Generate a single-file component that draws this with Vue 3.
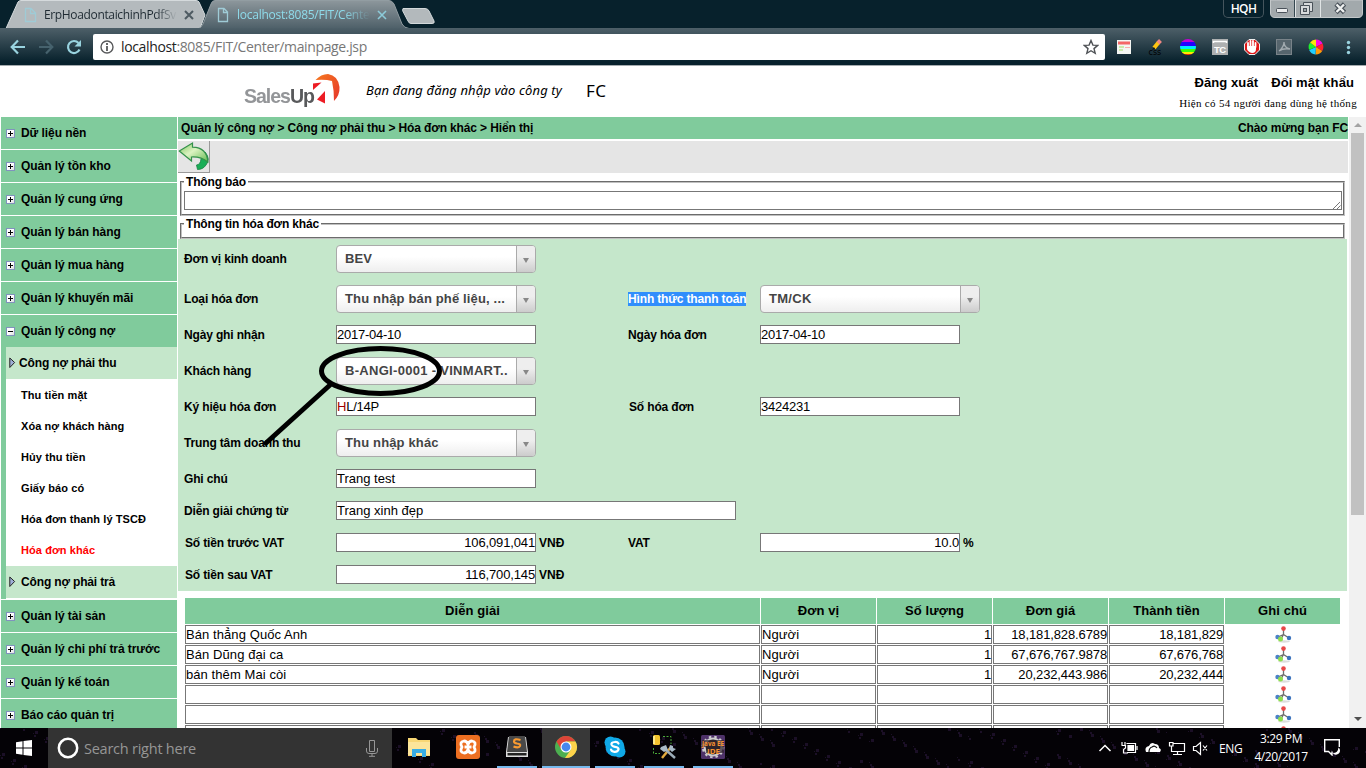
<script setup>
const topMenu = ['Dữ liệu nền', 'Quản lý tồn kho', 'Quản lý cung ứng', 'Quản lý bán hàng', 'Quản lý mua hàng', 'Quản lý khuyến mãi']
const subMenu = ['Thu tiền mặt', 'Xóa nợ khách hàng', 'Hủy thu tiền', 'Giấy báo có', 'Hóa đơn thanh lý TSCĐ', 'Hóa đơn khác']
const bottomMenu = ['Quản lý tài sản', 'Quản lý chi phí trả trước', 'Quản lý kế toán', 'Báo cáo quản trị']

const formRows = [
  { label: 'Đơn vị kinh doanh', select: 'BEV' },
  { label: 'Loại hóa đơn', select: 'Thu nhập bán phế liệu, ...', label2: 'Hình thức thanh toán', select2: 'TM/CK', marked: true },
  { label: 'Ngày ghi nhận', input: '2017-04-10', label2: 'Ngày hóa đơn', input2: '2017-04-10', digits: true },
  { label: 'Khách hàng', select: 'B-ANGI-0001 - VINMART..', caps: true },
  { label: 'Ký hiệu hóa đơn', input: 'HL/14P', red: true, label2: 'Số hóa đơn', input2: '3424231', digits: true },
  { label: 'Trung tâm doanh thu', select: 'Thu nhập khác' },
  { label: 'Ghi chú', input: 'Trang test' },
  { label: 'Diễn giải chứng từ', input: 'Trang xinh đẹp', wide: true },
  { label: 'Số tiền trước VAT', input: '106,091,041', unit: 'VNĐ', num: true, label2: 'VAT', input2: '10.0', unit2: '%' },
  { label: 'Số tiền sau VAT', input: '116,700,145', unit: 'VNĐ', num: true }
]

const columns = ['Diễn giải', 'Đơn vị', 'Số lượng', 'Đơn giá', 'Thành tiền', 'Ghi chú']
const rows = [
  ['Bán thẳng Quốc Anh', 'Người', '1', '18,181,828.6789', '18,181,829'],
  ['Bán Dũng đại ca', 'Người', '1', '67,676,767.9878', '67,676,768'],
  ['bán thêm Mai còi', 'Người', '1', '20,232,443.986', '20,232,444'],
  ['', '', '', '', ''],
  ['', '', '', '', ''],
  ['', '', '', '', '']
]

// Faint specks of the dark wallpaper behind the taskbar
const specks = Array.from({ length: 420 }, (_, i) => ({
  x: Math.floor(((i * 97.31) % 1366) / 11) * 11 + (i % 3),
  y: (i * 37) % 40,
  w: 1 + (i % 3),
  h: 1 + (i % 3)
}))
</script>

<template>
  <div class="screen">
    <header class="chrome">
      <svg class="tabs-bg" width="1366" height="29" viewBox="0 0 1366 29">
        <defs>
          <linearGradient id="tabg" x1="0" y1="0" x2="0" y2="1">
            <stop offset="0" stop-color="#8d979c" /><stop offset="1" stop-color="#4d5f68" />
          </linearGradient>
        </defs>
        <path d="M6 28.500L18 2Q19 .5 21 .5H196Q198 .5 199 2L205 15L200 28.500Z" fill="#b4babd" stroke="#d5dadc" />
        <path d="M198 29Q201 28 203 24L211 4Q212 .5 215 .5H389Q392 .5 394 4L402 24Q404 28 409 29Z" fill="url(#tabg)" />
        <path d="M198 29Q201 28 203 24L211 4Q212 .5 215 .5H389Q392 .5 394 4L402 24Q404 28 409 28.500" fill="none" stroke="#929da2" />
        <path d="M403 8.500H425Q428 8.500 429 11L434 21Q435 23.500 432 23.500H411Q409 23.500 408 21L402.500 10.500Z" fill="#b3b9bc" stroke="#d3d9db" />
        <g fill="none" stroke="#9fcbd6" stroke-width="1.300">
          <path d="M25.500 8.500H31L35.500 13V21.500H25.500ZM30.500 9V13.500H35" />
          <path d="M218.500 8.500H224L227.500 12V21.500H218.500ZM223.500 9V12.500H227" />
        </g>
        <path d="M185 11L193 19M193 11L185 19" stroke="#4e5b62" stroke-width="2" />
        <path d="M378 11L386 19M386 11L378 19" stroke="#8ccbd9" stroke-width="1.600" />
      </svg>
      <div class="tabtext">
        <span class="tab one">ErpHoadontaichinhPdfSv</span>
        <span class="tab two">localhost:8085/FIT/Cente</span>
      </div>
      <div class="winctl">
        <span class="user">HQH</span>
        <svg width="94" height="18" viewBox="0 0 94 18">
          <path d="M.5 0V13Q.5 17.500 5 17.500H88Q92.500 17.500 92.500 13V0Z" fill="#a2a9ac" stroke="#c3c8ca" />
          <path d="M25.500 0V17M50.500 0V17" stroke="#e0e4e5" /><path d="M24.500 0V17" stroke="#354750" />
          <rect x="6.500" y="8.500" width="11" height="4" rx="1" fill="#e9ebec" stroke="#495159" />
          <path d="M33.500 2.500H42.500V11.500H39.500V14.500H30.500V5.500H33.500Z" fill="#d7dadc" stroke="#495159" />
          <rect x="33.500" y="8.500" width="3" height="3" fill="#a2a9ac" stroke="#495159" />
          <path d="M33.500 5.500H39.500V11.500" fill="none" stroke="#495159" />
          <path d="M66 4L74.500 12.500M74.500 4L66 12.500" stroke="#495159" stroke-width="4.600" />
          <path d="M66.500 4.500L74 12M74 4.500L66.500 12" stroke="#eef0f0" stroke-width="2.400" />
        </svg>
      </div>
      <div class="toolbar">
        <svg class="nav" width="93" height="37" viewBox="0 28 93 37" fill="none" stroke-width="2.200">
          <path d="M25 47H12M18 40.500L11.700 47L18 53.500" stroke="#99d3df" />
          <path d="M39 47H52M46 40.500L52.300 47L46 53.500" stroke="#46626d" />
          <path d="M78.500 43A6 6 0 1 0 79.500 49.500" stroke="#99d3df" /><path d="M81 40V46.500H74.500Z" fill="#99d3df" />
        </svg>
        <div class="omni">
          <svg width="14" height="14" viewBox="0 0 14 14"><circle cx="7" cy="7" r="6" fill="none" stroke="#58595b" stroke-width="1.400" /><path d="M7 6V11M7 3V5" stroke="#58595b" stroke-width="1.800" /></svg>
          <span class="url">localhost<i>:8085/FIT/Center/mainpage.jsp</i></span>
          <svg class="star" width="16" height="16" viewBox="0 0 16 16"><path d="M8 1.500L9.900 6.100L14.700 6.400L11 9.600L12.200 14.300L8 11.700L3.800 14.300L5 9.600L1.300 6.400L6.100 6.100Z" fill="none" stroke="#4f5256" stroke-width="1.400" /></svg>
        </div>
        <svg class="ext" width="261" height="37" viewBox="1105 28 261 37">
          <rect x="1117" y="40" width="14" height="14" fill="#f4f6f3" /><path d="M1118 43H1130" stroke="#f46767" stroke-width="3" /><path d="M1125 47.500H1130" stroke="#f8b0b0" /><path d="M1119 47H1124M1119 50H1123" stroke="#a1df62" />
          <path d="M1154 48L1158.500 42.500" stroke="#ffc411" stroke-width="4" /><path d="M1158 43L1160.500 40.500" stroke="#f18883" stroke-width="4" /><path d="M1152 50L1154 47L1155 49Z" fill="#111" />
          <text x="1148.500" y="55" font-family="DejaVu Sans" font-size="8">css</text>
          <clipPath id="ball"><circle cx="1188" cy="47" r="8" /></clipPath>
          <g clip-path="url(#ball)"><path d="M1180 39h16v3h-16z" fill="#c200d6" /><path d="M1180 42h16v4h-16z" fill="#2100ff" /><path d="M1180 46h16v3h-16z" fill="#00eaff" /><path d="M1180 49h16v3h-16z" fill="#37ff09" /><path d="M1180 52h16v2h-16z" fill="#ffe900" /><path d="M1180 54h16v2h-16z" fill="#ff3200" /></g>
          <rect x="1212" y="39" width="16" height="16" fill="#aeb0b1" /><path d="M1213.500 43V41.500H1226.500V43" fill="none" stroke="#fff" stroke-width="1.500" />
          <text x="1214" y="53" font-family="Liberation Sans" font-weight="700" font-size="9.500" fill="#fff" textLength="12">TC</text>
          <path d="M1249 39.500H1255L1259.500 44V50L1255 54.500H1249L1244.500 50V44Z" fill="#df1717" stroke="#eee" />
          <path d="M1248 47V43M1250.500 46V41M1253 46V41M1255.500 47V43" stroke="#fff" stroke-width="1.800" stroke-linecap="round" /><path d="M1247 46H1256V49Q1256 53 1252 53Q1248 52 1247 49Z" fill="#fff" />
          <rect x="1276.500" y="39.500" width="15" height="15" fill="#56656d" stroke="#798389" /><path d="M1279 51Q1284 47 1284 42Q1284 48 1290 49Q1283 48 1279 51" fill="none" stroke="#a2abb0" stroke-width="1.300" />
          <g fill="none" stroke-width="7.400" transform="rotate(-90 1316 47)"><circle cx="1316" cy="47" r="3.700" stroke="#fc0ae0" stroke-dasharray="3.875 19.370" /><circle cx="1316" cy="47" r="3.700" stroke="#ff2030" stroke-dasharray="3.875 19.370" stroke-dashoffset="-3.875" /><circle cx="1316" cy="47" r="3.700" stroke="#ff9a08" stroke-dasharray="3.875 19.370" stroke-dashoffset="-7.750" /><circle cx="1316" cy="47" r="3.700" stroke="#20cfff" stroke-dasharray="3.875 19.370" stroke-dashoffset="-11.620" /><circle cx="1316" cy="47" r="3.700" stroke="#20ef2d" stroke-dasharray="3.875 19.370" stroke-dashoffset="-15.500" /><circle cx="1316" cy="47" r="3.700" stroke="#ffe408" stroke-dasharray="3.875 19.370" stroke-dashoffset="-19.370" /></g>
          <g fill="#99d3df"><circle cx="1348.500" cy="42.500" r="1.700" /><circle cx="1348.500" cy="47.500" r="1.700" /><circle cx="1348.500" cy="52.500" r="1.700" /></g>
        </svg>
      </div>
    </header>

    <div class="sitehead">
      <div class="logo">
        <span class="brand">Sales<b>Up</b></span>
        <svg class="swoosh" width="30" height="32" viewBox="311 73 30 32">
          <defs><linearGradient id="or" x1="0" y1="0" x2="1" y2="1"><stop offset="0" stop-color="#f6791e" /><stop offset="1" stop-color="#e5352c" /></linearGradient></defs>
          <path d="M315.500 80Q321 74 328 74Q338 75.500 339.500 87Q340 95 334 101Q334 90 332 81Q325 79 315.500 80Z" fill="url(#or)" />
          <path d="M313 83.500L321.500 82.500L313 90Z" fill="#ed1c24" /><path d="M317 99.500L325 91V103.500Z" fill="#ed1c24" />
        </svg>
      </div>
      <em class="login">Bạn đang đăng nhập vào công ty</em>
      <span class="fc">FC</span>
      <div class="account">
        <div class="links"><b>Đăng xuất</b><b class="pw">Đổi mật khẩu</b></div>
        <div class="online">Hiện có 54 người đang dùng hệ thống</div>
      </div>
    </div>

    <div class="body">
      <nav class="side">
        <div v-for="m in topMenu" :key="m" class="item"><i class="box plus"></i><span>{{ m }}</span></div>
        <div class="item open"><i class="box"></i><span>Quản lý công nợ</span></div>
        <div class="group">
          <div class="sub"><svg width="7" height="12" viewBox="0 0 7 12"><path d="M.8 1L5.600 5.500L.8 10.500Z" fill="#9fb0d8" stroke="#222" /></svg><span>Công nợ phải thu</span></div>
          <div v-for="(m, i) in subMenu" :key="m" class="leaf" :class="{ current: i === 5 }">{{ m }}</div>
          <div class="sub second"><svg width="7" height="12" viewBox="0 0 7 12"><path d="M.8 1L5.600 5.500L.8 10.500Z" fill="#9fb0d8" stroke="#222" /></svg><span>Công nợ phải trả</span></div>
        </div>
        <div v-for="m in bottomMenu" :key="m" class="item"><i class="box plus"></i><span>{{ m }}</span></div>
      </nav>

      <main class="main">
        <div class="crumb"><span>Quản lý công nợ &gt; Công nợ phải thu &gt; Hóa đơn khác &gt; Hiển thị</span><span class="hello">Chào mừng bạn FC</span></div>
        <div class="actions">
          <div class="back">
            <svg width="31" height="31" viewBox="178 141 31 31">
              <defs><linearGradient id="gr" x1="0" y1="0" x2="1" y2="1"><stop offset="0" stop-color="#7cc45c" /><stop offset=".45" stop-color="#dcf3c2" /><stop offset="1" stop-color="#62ba50" /></linearGradient></defs>
              <path d="M205 152Q211 159 206 165Q203 169.500 197.500 169.500L196.500 165Q200.500 164.500 201 159Z" fill="#19ae57" stroke="#168243" stroke-width=".8" />
              <path d="M179.300 151L192.500 143V147.200Q207 147.500 207.800 162Q201 156.500 191.500 157V161Z" fill="url(#gr)" stroke="#33914a" stroke-width="1.200" />
            </svg>
          </div>
        </div>
        <fieldset class="note"><legend>Thông báo</legend><div class="area"><svg width="8" height="8" viewBox="0 0 8 8"><path d="M0 8L7 1M4 8L7.500 4.500" stroke="#666" stroke-width=".9" /></svg></div></fieldset>
        <fieldset class="info"><legend>Thông tin hóa đơn khác</legend></fieldset>

        <section class="form">
          <div v-for="r in formRows" :key="r.label" class="frow" :class="{ tall: r.select, digits: r.digits }">
            <label :class="{ money: r.num }">{{ r.label }}</label>
            <div class="ctl">
              <div v-if="r.select" class="select" :class="{ caps: r.caps }"><span>{{ r.select }}</span><i></i></div>
              <div v-else class="input" :class="{ wide: r.wide, num: r.num }"><template v-if="r.red"><u>H</u>{{ r.input.slice(1) }}</template><template v-else>{{ r.input }}</template></div>
              <b v-if="r.unit" class="unit">{{ r.unit }}</b>
            </div>
            <label v-if="r.label2"><span :class="{ marked: r.marked, money: r.label2 === 'Số hóa đơn' }">{{ r.label2 }}</span></label>
            <div v-if="r.label2" class="ctl">
              <div v-if="r.select2" class="select big"><span>{{ r.select2 }}</span><i></i></div>
              <div v-else class="input" :class="{ num: r.unit2 }">{{ r.input2 }}</div>
              <b v-if="r.unit2" class="unit">{{ r.unit2 }}</b>
            </div>
          </div>
          <svg class="scribble" width="130" height="108" viewBox="260 340 130 108">
            <ellipse cx="380.500" cy="371" rx="59" ry="22.500" />
            <path d="M330 385L266 443" />
          </svg>
        </section>

        <section class="grid">
          <div class="gr head"><div v-for="c in columns" :key="c">{{ c }}</div></div>
          <div v-for="(r, i) in rows" :key="i" class="gr line">
            <div v-for="(c, j) in r" :key="j" class="cell" :class="{ right: j > 1 }">{{ c }}</div>
            <div class="ico">
              <svg width="17" height="17" viewBox="0 0 17 17">
                <ellipse cx="9" cy="15.500" rx="6" ry="1.200" fill="#ddd" />
                <path d="M8.500 3V8.500L3 11M8.500 8.500L14 12M8.500 8.500L6 13" fill="none" stroke="#6d6d6d" stroke-width="1.300" />
                <circle cx="8.500" cy="2.600" r="2.300" fill="#e84848" /><circle cx="2.500" cy="11" r="2.200" fill="#4c82c6" /><circle cx="14" cy="12" r="2.200" fill="#3c73bd" /><circle cx="5.500" cy="13" r="2.500" fill="#8de04c" />
              </svg>
            </div>
          </div>
        </section>
      </main>
      <div class="scroll"><i class="up"></i><div class="thumb"></div><i class="down"></i></div>
    </div>

    <footer class="taskbar">
      <svg class="wall" width="1366" height="40"><rect v-for="(s, i) in specks" :key="i" :x="s.x" :y="s.y" :width="s.w" :height="s.h" fill="#1b0f26" /></svg>
      <div class="start"><svg width="16" height="16" viewBox="0 0 16 16"><path d="M0 2.200L6.500 1.300V7.500H0ZM7.500 1.100L16 0V7.500H7.500ZM0 8.500H6.500V14.700L0 13.800ZM7.500 8.500H16V16L7.500 14.900Z" fill="#fff" /></svg></div>
      <div class="search">
        <svg width="22" height="22" viewBox="0 0 22 22"><circle cx="11" cy="11" r="9.200" fill="none" stroke="#fff" stroke-width="2.500" /></svg>
        <span>Search right here</span>
        <svg class="mic" width="12" height="17" viewBox="0 0 12 17"><path d="M3.500.5H8.500V11.500H3.500ZM.5 8V11Q.5 13.500 3 13.500H9Q11.500 13.500 11.500 11V8M6 13.500V16M3 16.300H9" fill="none" stroke="#969696" /></svg>
      </div>
      <div class="app">
        <svg width="24" height="24" viewBox="0 0 24 24"><path d="M1 3H9L11 5H23V21H1Z" fill="#f8d775" /><path d="M1 7H23V20H1Z" fill="#fce59a" /><path d="M5 22V14H19V22H15V18H9V22Z" fill="#38ade4" /></svg>
      </div>
      <div class="app">
        <svg width="24" height="24" viewBox="0 0 24 24"><rect width="24" height="24" rx="3" fill="#ed6f21" /><path d="M8 6Q11 6 12 9.500Q13 6 16 6Q21 7 18 12Q21 17 16 18Q13 18 12 14.500Q11 18 8 18Q3 17 6 12Q3 7 8 6ZM8.500 12H15.500" fill="none" stroke="#fff" stroke-width="2.800" stroke-linejoin="round" /></svg>
      </div>
      <div class="app run">
        <svg width="24" height="24" viewBox="0 0 24 24"><path d="M3 2H21L23 17V22H1V17Z" fill="#ddd" /><path d="M4 1H20L22 17H2Z" fill="#484848" /><path d="M2.500 18H21.500V20.500H2.500Z" fill="#222" /><path d="M15.500 5Q9 3 9 6.500Q9 8 12 8.500Q16 9 15 11Q13.500 13.500 8.500 11.500" fill="none" stroke="#f89a32" stroke-width="2.200" /></svg>
      </div>
      <div class="app run active">
        <svg width="24" height="24" viewBox="0 0 24 24"><circle cx="12" cy="12" r="11" fill="#4caf50" /><path d="M2.500 6.500A11 11 0 0 1 21.500 6.500H12L7.300 14.500Z" fill="#dd4438" /><path d="M21.500 6.500A11 11 0 0 1 11 23L16.800 14.700L12 6.500Z" fill="#fdd24a" /><circle cx="12" cy="12" r="5.500" fill="#fff" /><circle cx="12" cy="12" r="4.400" fill="#4588ee" /></svg>
      </div>
      <div class="app run">
        <svg width="24" height="24" viewBox="0 0 24 24"><circle cx="12" cy="12" r="9.500" fill="#10a9e7" /><circle cx="7.500" cy="7.500" r="6" fill="#10a9e7" /><circle cx="16.500" cy="16.500" r="6" fill="#10a9e7" /><path d="M15.500 8.500Q14.500 6.500 11.500 7Q8 7.500 8.500 9.500Q9 11.300 12 11.800Q16 12.500 15.500 14.500Q14.500 17 11.500 16.800Q8.500 16.500 8 14.500" fill="none" stroke="#fff" stroke-width="2.200" stroke-linecap="round" /></svg>
      </div>
      <div class="app run">
        <svg width="24" height="24" viewBox="0 0 24 24"><rect x="1" width="7" height="10" rx="1.500" fill="#f4c32e" /><path d="M2 1V9" stroke="#fff4a8" stroke-width="1.500" /><path d="M11 1.500H19V9M1.500 13V18.500H8" fill="none" stroke="#4cad3b" stroke-dasharray="2 1.500" /><path d="M10 23L19 12" stroke="#e3a93d" stroke-width="2.500" /><path d="M14 15L23 23" stroke="#9cacb8" stroke-width="2.500" /><path d="M9 12L14 10L16 15L12 17L8 14ZM17 14L18 10L21 11V13L24 14L20 17Z" fill="#a9bac6" /></svg>
      </div>
      <div class="app run">
        <svg width="24" height="24" viewBox="0 0 24 24"><rect width="24" height="24" rx="1.500" fill="#4e3269" /><circle cx="12" cy="12" r="8.500" fill="#222" stroke="#ccc" stroke-width="2.200" /><circle cx="12" cy="12" r="10.300" fill="none" stroke="#ccc" stroke-width="2" stroke-dasharray="2.500 3" /><path d="M1 5H23V18H5V12H1Z" fill="#33252e" opacity=".7" /><text x="1" y="10.500" font-size="7" textLength="22" lengthAdjust="spacingAndGlyphs" font-weight="700" fill="#f79332">Java EE</text><text x="6" y="18.500" font-size="7" textLength="13" lengthAdjust="spacingAndGlyphs" font-weight="700" fill="#f79332">IDE</text></svg>
      </div>
      <svg class="tray" width="120" height="40" viewBox="1095 728 120 40" fill="none" stroke="#fff" stroke-width="1.200">
        <path d="M1099.500 751L1105 745.500L1110.500 751" stroke-width="1.500" />
        <path d="M1126.500 743.500H1135.500V752.500H1127" /><path d="M1128 745.500H1133.500V750.500H1128Z" fill="#fff" /><path d="M1122 742V745M1125 742V745M1121.500 745.500H1125.500V748L1123.500 749.500V753H1128M1137 746V750" />
        <path d="M1146 752Q1144 747 1149 746Q1151 741 1155 744Q1159 744 1159 748Q1162 749 1160 752Z" fill="#fff" stroke="none" /><path d="M1149 752Q1149 748 1152 747Q1155 745 1157 748" stroke="#111" />
        <path d="M1173.500 743.500H1184.500V751.500H1171.500V747M1177.500 752V754M1173 754.500H1182M1169.500 742.500H1173V746H1169.500ZM1171.500 746V749" />
        <path d="M1193.500 746.500H1196L1200.500 742.500V754.500L1196 750.500H1193.500ZM1203 745.500L1207 750.500M1207 745.500L1203 750.500" />
      </svg>
      <span class="lang">ENG</span>
      <div class="clock"><span>3:29 PM</span><span>4/20/2017</span></div>
      <svg class="action" width="17" height="17" viewBox="0 0 17 17" fill="none" stroke="#fff" stroke-width="1.400"><path d="M15.300 8V.7H.7V12.500H4.500L8 16V12.500" /><path d="M14.500 8.500A4 4 0 1 1 8.800 14Q14 14 14.500 8.500Z" fill="#fff" stroke="none" /></svg>
    </footer>
  </div>
</template>

<style>
body { margin: 0; overflow: hidden; }
</style>

<style scoped>
* { box-sizing: border-box; }
.screen { width: 1366px; height: 768px; overflow: hidden; display: flex; flex-direction: column; background: #fff; font-family: "Liberation Sans", Arial, sans-serif; color: #000; font-size: 12px; }
svg { display: block; flex: none; }
.chrome { position: relative; height: 66px; background: #07212c; border-bottom: 1px solid #a4abae; flex: none; display: flex; flex-direction: column; font-family: "Open Sans", sans-serif; }
.tabs-bg { position: absolute; left: 0; top: 0; }
.tabtext { position: relative; height: 28px; display: flex; white-space: nowrap; line-height: 29px; font-size: 12px; letter-spacing: -.35px; flex: none; }
.tab { width: 133px; margin-left: 44px; }
.one { color: #1f2b33; -webkit-mask-image: linear-gradient(90deg, #000 84%, transparent); mask-image: linear-gradient(90deg, #000 84%, transparent); }
.two { margin-left: 60px; color: #8edbea; letter-spacing: -.25px; -webkit-mask-image: linear-gradient(90deg, #000 80%, transparent); mask-image: linear-gradient(90deg, #000 80%, transparent); }
.winctl { position: absolute; right: 2px; top: 0; display: flex; }
.winctl svg { margin-left: 6px; }
.user { width: 41px; height: 18px; border: 1px solid #45555d; border-top: 0; border-radius: 0 0 5px 5px; color: #fff; font: 600 12px/18px "Open Sans", sans-serif; text-align: center; letter-spacing: -.6px; }
.toolbar { height: 37px; display: flex; background: linear-gradient(#4d5f68, #07212c 92%); position: relative; }
.omni { width: 1012px; height: 26px; margin-top: 6px; background: #fff; border-radius: 2px; display: flex; align-items: center; padding: 0 6px 0 7px; flex: none; }
.url { margin-left: 7px; font-size: 14px; line-height: 26px; letter-spacing: -.36px; color: #222; }
.url i { font-style: normal; color: #777; }
.star { margin-left: auto; }

.sitehead { height: 51px; display: flex; flex: none; align-items: flex-start; position: relative; white-space: nowrap; }
.logo { width: 97px; height: 51px; margin-left: 244px; display: flex; position: relative; }
.brand { margin-top: 17px; font: 700 21px/26px "Liberation Sans", sans-serif; letter-spacing: -1.100px; color: #939598; transform: scaleX(.93); transform-origin: 0 0; }
.brand b { color: #58595b; }
.swoosh { position: absolute; right: 0; top: 7px; }
.login { margin: 14px 0 0 25px; width: 196px; font: italic 13px/20px "Noto Sans", sans-serif; letter-spacing: .12px; }
.fc { margin: 14px 0 0 24px; font: 17px/22px "Noto Sans", sans-serif; letter-spacing: .4px; }
.account { margin: 8px 9px 0 auto; display: flex; flex-direction: column; align-items: flex-end; }
.links { display: flex; gap: 13px; font-size: 13px; line-height: 17px; padding-right: 3px; letter-spacing: .1px; }
.online { font: 11px/15px "Liberation Serif", serif; margin-top: 5px; letter-spacing: .32px; }

.body { height: 611px; display: flex; flex: none; overflow: hidden; }
.side { width: 176px; margin-left: 1px; flex: none; font-weight: 700; letter-spacing: -.06px; }
.item { height: 32px; margin-bottom: 1px; background: #80cb9c; display: flex; align-items: center; padding-left: 5px; }
.item.open { margin-bottom: 0; }
.box { position: relative; width: 9px; height: 9px; background: linear-gradient(135deg, #fff 50%, #ddd); border: 1px solid #8192bd; margin-right: 6px; }
.box::before { content: ""; position: absolute; left: 1px; top: 3px; width: 5px; height: 1px; background: #000; }
.plus::after { content: ""; position: absolute; left: 3px; top: 1px; width: 1px; height: 5px; background: #000; }
.group { border-left: 5px solid #80cb9c; height: 252px; margin-bottom: 1px; }
.sub { height: 32px; background: #c5e7cb; display: flex; align-items: center; padding-left: 3px; gap: 3px; letter-spacing: -.15px; }
.second { gap: 5px; }
.leaf { height: 31px; line-height: 33px; padding-left: 15px; font-size: 11px; letter-spacing: .08px; }
.current { color: #f00; }
.leaf.current { height: 32px; }

.main { width: 1170px; margin-left: 1px; flex: none; }
.crumb { height: 22px; background: #80cb9c; display: flex; justify-content: space-between; padding-left: 3px; font-weight: 700; line-height: 22px; letter-spacing: -.13px; }
.hello { letter-spacing: -.08px; }
.actions { height: 32px; margin-top: 2px; background: #e5e5e5; }
.back { width: 32px; height: 32px; border-right: 1px solid #999; border-bottom: 1px solid #999; }
fieldset { margin: 0 3px 0 2px; padding: 0 2px; border: 2px groove #c0c0c0; min-width: 0; }
legend { padding: 0 2px; font-weight: 700; line-height: 14px; letter-spacing: -.16px; }
.note { height: 41px; margin-top: 2px; padding-top: 2px; }
.area { height: 19px; width: 1158px; border: 1px solid #777; display: flex; justify-content: flex-end; align-items: flex-end; }
.info { margin-top: 1px; height: 22px; margin-right: 3px; }
.form { position: relative; width: 1169px; background: #c5e7cb; }
.frow { height: 32px; display: grid; grid-template-columns: 152px 292px 132px 1fr; align-items: center; padding-left: 6px; }
.tall { height: 40px; }
label { font-weight: 700; font-size: 12px; letter-spacing: -.15px; }
.money { padding-left: 1px; }
.marked { background: #308efc; color: #fff; display: inline-block; height: 14px; line-height: 14px; white-space: nowrap; }
.ctl { display: flex; align-items: center; }
.input { width: 200px; height: 19px; position: relative; top: -1px; background: #fff; border: 1px solid #777; font-size: 13px; line-height: 17px; white-space: nowrap; flex: none; }
.digits .input { letter-spacing: -.24px; }
.input u { text-decoration: none; color: #a00000; }
.wide { width: 400px; }
.num { text-align: right; letter-spacing: -.14px; }
.unit { margin-left: 3px; letter-spacing: 0; }
.select { width: 200px; height: 28px; border: 1px solid #aaa; border-radius: 4px; background: linear-gradient(#fff 40%, #eee); display: flex; color: #444; font-weight: 700; font-size: 13px; line-height: 25px; letter-spacing: .15px; overflow: hidden; white-space: nowrap; }
.caps { letter-spacing: .3px; }
.big { width: 220px; letter-spacing: .3px; }
.select span { flex: 1; padding-left: 8px; }
.select i { width: 19px; border-left: 1px solid #aaa; background: linear-gradient(#eee 40%, #ccc); display: flex; align-items: center; justify-content: center; }
.select i::after { content: ""; border: 3px solid transparent; border-top: 5px solid #888; border-bottom: 0; margin-top: 3px; }
.scribble { position: absolute; left: 82px; top: 101px; overflow: visible; }
.scribble * { fill: none; stroke: #000; stroke-width: 5; stroke-linecap: round; }

.grid { margin: 7px 0 0 7px; width: 1155px; }
.gr { display: grid; grid-template-columns: 575px repeat(5, 115px); gap: 1px; height: 19px; margin-bottom: 1px; }
.head { height: 26px; margin-bottom: 1px; font-weight: 700; font-size: 13px; line-height: 25px; text-align: center; letter-spacing: .1px; }
.head div { background: #80cb9c; }
.cell { height: 19px; border: 1px solid #777; font-size: 13px; line-height: 17px; letter-spacing: .08px; white-space: nowrap; }
.right { text-align: right; letter-spacing: -.12px; }
.ico { display: flex; justify-content: center; padding: 1px 0 0 1px; overflow: hidden; height: 20px; }
.scroll { width: 17px; margin-left: 1px; background: #f1f1f1; display: flex; flex-direction: column; align-items: center; }
.up { border: 4px solid transparent; border-bottom-color: #a3a3a3; border-top: 0; margin: 6px 0; }
.thumb { width: 13px; height: 382px; background: #c1c1c1; }
.down { border: 4px solid transparent; border-top-color: #505050; border-bottom: 0; margin: auto 0 7px; }

.taskbar { position: relative; height: 40px; background: #040206; display: flex; align-items: center; flex: none; font-family: "Open Sans", sans-serif; color: #fff; }
.wall { position: absolute; left: 0; top: 0; }
.start { width: 48px; display: flex; justify-content: center; position: relative; }
.search { position: relative; width: 344px; height: 40px; background: #333; display: flex; align-items: center; padding: 0 14px 0 9px; color: #969696; font-size: 14.500px; margin-right: 3px; }
.search span { margin-left: 5px; letter-spacing: -.24px; }
.mic { margin-left: auto; }
.app { position: relative; width: 48px; height: 40px; margin-right: 1px; display: flex; align-items: center; justify-content: center; border-bottom: 2px solid transparent; flex: none; }
.run::after { content: ""; position: absolute; left: 4px; right: 4px; bottom: -2px; height: 2px; background: #76b9ed; }
.active { background: #383838; }
.active::after { left: 0; right: 0; }
.tray { margin-left: 357px; position: relative; }
.lang { margin-left: 4px; font-size: 12px; letter-spacing: -.4px; position: relative; width: 30px; }
.clock { position: relative; display: flex; flex-direction: column; align-items: center; width: 60px; margin-left: 2px; font-size: 12px; line-height: 18px; letter-spacing: -.4px; }
.action { position: relative; margin-left: 13px; margin-top: -1px; }
</style>
